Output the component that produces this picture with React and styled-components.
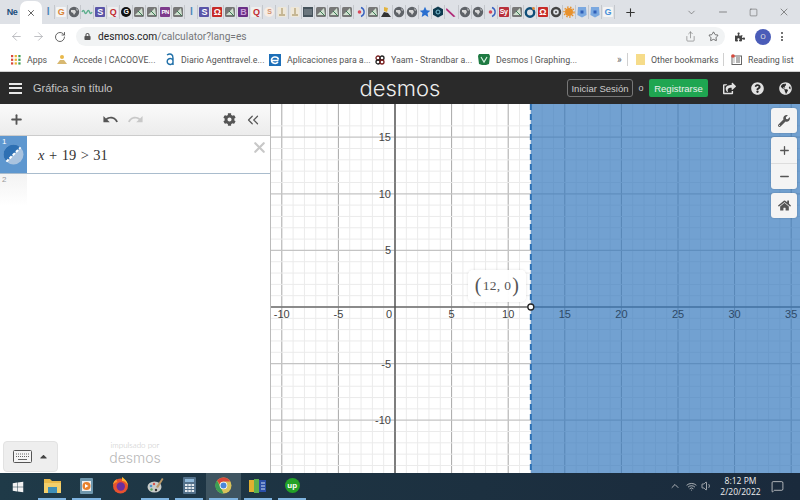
import React from 'react';
import styled, { createGlobalStyle } from 'styled-components';
import { ArrowLeft, ArrowRight, RotateCw, Share, Star, ChevronDown, Minus, Square, X, Plus, ChevronsLeft, ChevronUp, Volume1, MessageSquare, Wifi } from 'lucide-react';
import { FaLock, FaPuzzlePiece, FaShareSquare, FaQuestionCircle, FaGlobeAmericas, FaCog, FaWrench, FaHome, FaWindows, FaCaretUp } from 'react-icons/fa';
import { MdUndo, MdRedo } from 'react-icons/md';

const GlobalStyle = createGlobalStyle`
  html, body { margin: 0; padding: 0; background: #fff; }
  * { box-sizing: border-box; }
`;

const Page = styled.div`
  width: 800px;
  height: 500px;
  overflow: hidden;
  display: flex;
  flex-direction: column;
  font-family: Roboto, "Liberation Sans", sans-serif;
`;

/* browser chrome */
const TabStrip = styled.div`
  height: 24px;
  background: #dee1e6;
  display: flex;
  align-items: center;
  padding-left: 4px;
`;
const PinnedNote = styled.div`
  width: 16px;
  font: bold 9px "Liberation Sans", sans-serif;
  color: #1c4f7c;
  letter-spacing: -0.5px;
  text-align: center;
`;
const ActiveTab = styled.div`
  width: 22px;
  height: 24px;
  margin-top: 1px;
  background: #fff;
  border-radius: 7px 7px 0 0;
  display: flex;
  align-items: center;
  justify-content: center;
  color: #444;
`;
const FavRow = styled.div`
  display: flex;
  align-items: center;
`;
const FavSlot = styled.div`
  width: 13.03px;
  height: 14px;
  display: flex;
  align-items: center;
  justify-content: center;
  border-right: 1px solid #c4c7cc;
`;
const Tile = styled.span`
  width: 10px;
  height: 10px;
  display: flex;
  align-items: center;
  justify-content: center;
  background: ${p => p.$bg || 'transparent'};
  color: ${p => p.$fg || '#fff'};
  border-radius: ${p => (p.$round ? '50%' : '1px')};
  font: bold ${p => p.$size || 9}px/10px "Liberation Sans", sans-serif;
  letter-spacing: -0.5px;
`;
const NewTab = styled.div`
  margin-left: 9px;
  color: #333;
  display: flex;
`;
const WindowControls = styled.div`
  margin-left: auto;
  display: flex;
  align-items: center;
  color: #555;
  padding-right: 10px;
  gap: 20px;
`;
const Toolbar = styled.div`
  height: 24px;
  background: #fff;
  display: flex;
  align-items: center;
  padding: 1px 0 0 10px;
  color: #8a8c90;
`;
const NavButtons = styled.div`
  display: flex;
  align-items: center;
  gap: 9px;
  width: 66px;
`;
const Omnibox = styled.div`
  width: 649px;
  height: 19px;
  background: #f1f3f4;
  border-radius: 10px;
  display: flex;
  align-items: center;
  padding: 0 6px 0 8px;
`;
const Url = styled.div`
  margin-left: 7px;
  font-size: 10.2px;
  color: #75777a;
  span { color: #222; }
`;
const OmniIcons = styled.div`
  margin-left: auto;
  display: flex;
  align-items: center;
  gap: 12px;
  color: #555;
`;
const ProfileArea = styled.div`
  display: flex;
  align-items: center;
  margin-left: 10px;
  gap: 10px;
  color: #444;
`;
const Avatar = styled.div`
  width: 16px;
  height: 16px;
  border-radius: 50%;
  background: #4a5cb8;
  color: #ddd;
  font-size: 8px;
  display: flex;
  align-items: center;
  justify-content: center;
`;
const Dots = styled.div`
  display: flex;
  flex-direction: column;
  gap: 1.5px;
  i { width: 2px; height: 2px; background: #444; border-radius: 50%; display: block; }
`;
const Bookmarks = styled.div`
  height: 24px;
  background: #fff;
  border-bottom: 1px solid #d0d0d0;
  display: flex;
  align-items: center;
  padding-left: 11px;
`;
const Bookmark = styled.div`
  width: ${p => p.$w}px;
  flex: none;
  display: flex;
  align-items: center;
  gap: 6px;
  font-size: 8.8px;
  color: #555;
  white-space: nowrap;
  svg { flex: none; }
`;
const BookmarkSep = styled.div`
  width: 1px;
  height: 13px;
  background: #d0d0d0;
  flex: none;
  margin: ${p => p.$m};
`;
const Chevrons = styled.div`
  width: 10px;
  flex: none;
  margin-left: 44px;
  font-size: 10px;
  color: #666;
`;

/* desmos header */
const Header = styled.div`
  height: 32px;
  background: #2a2a2a;
  display: grid;
  grid-template-columns: 1fr auto 1fr;
  align-items: center;
  font-family: "Liberation Sans", sans-serif;
`;
const HeaderLeft = styled.div`
  display: flex;
  align-items: center;
  padding-left: 9px;
`;
const Burger = styled.div`
  width: 13px;
  display: flex;
  flex-direction: column;
  gap: 2.5px;
  i { display: block; height: 2px; background: #e8e8e8; }
`;
const GraphTitle = styled.div`
  margin-left: 11px;
  font-size: 11px;
  color: #c4c4c4;
`;
const Logo = styled.div`
  font-family: Inter, sans-serif;
  font-weight: 300;
  font-size: 22px;
  color: #eee;
  line-height: 32px;
`;
const HeaderRight = styled.div`
  display: flex;
  align-items: center;
  justify-content: flex-end;
  padding-right: 8px;
  color: #e2e2e2;
`;
const SignIn = styled.div`
  width: 66px;
  height: 18px;
  border: 1px solid #777;
  border-radius: 3px;
  font-size: 9.5px;
  color: #ccc;
  display: flex;
  align-items: center;
  justify-content: center;
`;
const OrText = styled.div`
  width: 16px;
  text-align: center;
  font-size: 9px;
  color: #ccc;
`;
const Register = styled.div`
  width: 59px;
  height: 18px;
  background: #1fa651;
  border-radius: 2px;
  font-size: 9.5px;
  color: #eee;
  display: flex;
  align-items: center;
  justify-content: center;
  margin-right: 15px;
`;
const HeaderIcons = styled.div`
  display: flex;
  align-items: center;
  gap: 15px;
`;

/* calculator body */
const Main = styled.div`
  height: 369px;
  display: flex;
`;
const Sidebar = styled.div`
  width: 271px;
  flex: none;
  display: flex;
  flex-direction: column;
  background: #fff;
  border-right: 1px solid #bbb;
`;
const ListTools = styled.div`
  height: 32px;
  flex: none;
  background: linear-gradient(#fafafa, #ececec);
  border-bottom: 1px solid #ccc;
  display: flex;
  align-items: center;
  padding-left: 9px;
  color: #555;
`;
const ToolGroup = styled.div`
  display: flex;
  align-items: center;
  gap: ${p => p.$gap}px;
  margin-left: ${p => p.$left}px;
`;
const ExpressionRow = styled.div`
  height: 38px;
  flex: none;
  display: flex;
  border-bottom: 1px solid #a9bccd;
`;
const RowTab = styled.div`
  width: 27px;
  flex: none;
  position: relative;
  background: #5e97cf;
  display: flex;
  align-items: center;
  justify-content: center;
`;
const RowIndex = styled.div`
  position: absolute;
  top: 1px;
  left: 2px;
  font: 8px "Liberation Sans", sans-serif;
  color: ${p => p.$muted ? '#999' : '#fff'};
`;
const MathField = styled.div`
  flex: 1;
  padding: 11px 0 0 11px;
  display: flex;
  justify-content: space-between;
  font: 14.5px "Liberation Serif", serif;
  color: #333;
  em { font-style: italic; }
  span { margin: 0 4.5px; }
`;
const RemoveBtn = styled.div`
  color: #c8c8c8;
  margin: -8px 2px 0 0;
  height: 16px;
`;
const EmptyRow = styled.div`
  height: 32px;
  width: 27px;
  flex: none;
  position: relative;
  background: linear-gradient(#f3f3f3, #fff);
`;
const SidebarFill = styled.div`
  flex: 1;
`;
const SidebarFoot = styled.div`
  height: 32px;
  flex: none;
  display: grid;
  grid-template-columns: 1fr auto 1fr;
  align-items: center;
  margin-bottom: 1px;
`;
const KeyboardBtn = styled.div`
  width: 55px;
  height: 31px;
  margin-left: 3px;
  background: #eee;
  border: 1px solid #e2e2e2;
  border-radius: 4px;
  display: flex;
  align-items: center;
  justify-content: center;
  gap: 6px;
  color: #444;
`;
const Powered = styled.div`
  text-align: center;
  color: #c4c4c4;
  font-family: Lato, sans-serif;
  font-weight: 300;
  margin-bottom: 6px;
  div { font-size: 8px; line-height: 9px; }
  strong { display: block; font-family: Inter, sans-serif; font-weight: 300; font-size: 14px; line-height: 15px; color: #b8b8b8; }
`;
const GraphArea = styled.div`
  flex: 1;
  position: relative;
  svg.graph { display: block; }
`;
const Tooltip = styled.div`
  position: absolute;
  left: 197px;
  top: 166px;
  width: 58px;
  height: 32px;
  background: rgba(255, 255, 255, 0.95);
  border-radius: 5px;
  box-shadow: 0 0 3px rgba(0, 0, 0, 0.12);
  display: flex;
  align-items: center;
  justify-content: center;
  font: 13.5px "Liberation Serif", serif;
  color: #555;
  letter-spacing: 0.3px;
  b { font-weight: 400; font-size: 20px; line-height: 20px; margin: 0 1px; position: relative; top: -1px; }
`;
const MapControls = styled.div`
  position: absolute;
  top: 4px;
  right: 3px;
  width: 26px;
  display: flex;
  flex-direction: column;
  gap: 4px;
`;
const ControlBox = styled.div`
  background: #f4f4f4;
  border-radius: 3px;
  box-shadow: 0 0 2px rgba(0, 0, 0, 0.25);
  color: #555;
`;
const ControlBtn = styled.div`
  height: ${p => p.$h}px;
  display: flex;
  align-items: center;
  justify-content: center;
  & + & { border-top: 1px solid #ddd; }
`;

/* windows taskbar */
const Taskbar = styled.div`
  height: 27px;
  flex: none;
  background: linear-gradient(90deg, #1f3a48, #1d3342 40%, #1a2a3c);
  display: flex;
  align-items: stretch;
  color: #eee;
`;
const StartBtn = styled.div`
  width: 35px;
  display: flex;
  align-items: center;
  justify-content: center;
  color: #f2f2f2;
`;
const TaskIcon = styled.div`
  width: 34.3px;
  flex: none;
  display: flex;
  align-items: center;
  justify-content: center;
  padding-bottom: 2px;
  position: relative;
  background: ${p => (p.$active ? '#3f5561' : 'transparent')};
  &::after {
    content: '';
    display: ${p => (p.$open ? 'block' : 'none')};
    position: absolute;
    left: 3px;
    right: 3px;
    bottom: 0;
    height: 2px;
    background: #7fb4e0;
  }
`;
const Tray = styled.div`
  margin-left: auto;
  display: flex;
  align-items: center;
  color: #ddd;
  gap: 4.5px;
  padding: 0 16px 1px 0;
`;
const Clock = styled.div`
  width: 46px;
  margin-right: 3px;
  padding-bottom: 1px;
  text-align: center;
  font: 8.5px/11px "Open Sans", sans-serif;
  color: #eee;
`;

const leaf = { kind: 'leaf' };
const globe = { kind: 'globe' };
const favs = [
  { text: 'l', fg: '#4a86b8', size: 10 }, { text: 'G', fg: '#d9843a', bg: '#f4f4f4' }, globe, { kind: 'wave' },
  { text: 'S', bg: '#5a55a8' }, { text: 'Q', fg: '#c02a30', bg: '#eee' }, { text: 'G', bg: '#111', round: true, size: 7 },
  leaf, leaf, { text: 'PN', bg: '#7d3a8c', size: 6 }, leaf, { text: 'l', fg: '#4a86b8', size: 10 },
  { text: 'S', bg: '#5a55a8' }, { text: 'Ω', bg: '#c72a28' }, leaf, { text: 'B', bg: '#6a2f86', fg: '#c9a0d8' },
  { text: 'Q', fg: '#c02a30', bg: '#eee' }, { text: 'S', fg: '#d29070', bg: '#f6ece4', round: true, size: 7 },
  { kind: 'pale' }, { kind: 'pale' }, { kind: 'calc' }, leaf, leaf, leaf, { kind: 'moon' }, leaf, { kind: 'cat' },
  globe, globe, { kind: 'star' }, { kind: 'hex' }, { kind: 'slash' }, globe, globe, { kind: 'moon' },
  { text: 'Sy', bg: '#b8303c', size: 7 }, leaf, { kind: 'ring' }, { text: 'Ω', bg: '#c72a28' }, { kind: 'gear' },
  { kind: 'orange' }, { kind: 'shield' }, { kind: 'shield' }, { text: 'G', fg: '#4a90d9', bg: '#f4f4f4' },
];

function FavGlyph({ kind }) {
  const inner = {
    leaf: <><rect x="1" y="1" width="10" height="10" rx="1.5" fill="#777" /><path d="M2 9 L9 2 L10 9Z" fill="#cfe0cf" /><path d="M5 5l5 5" stroke="#3d7a55" /></>,
    globe: <><circle cx="6" cy="6" r="5.2" fill="#5f6368" /><path d="M3 4h4l1 2-2 3-1-2-2-1z M8 2l2 2-1 1z" fill="#d8d8d8" /></>,
    wave: <path d="M1 6q1.5-3 2.5 0t2.5 0 2.5 0 2.5 0" fill="none" stroke="#5cae8c" strokeWidth="1.4" />,
    pale: <><rect x="1.5" y="1" width="9" height="10" rx="1" fill="#eee7d8" /><path d="M6 2v6M3 9h6" stroke="#b8a67c" strokeWidth="1.4" /></>,
    calc: <><rect x="1" y="1" width="10" height="10" fill="#46535c" /><path d="M2.5 4h7M2.5 6h7M2.5 8h7" stroke="#d8dde0" strokeDasharray="1 1" /></>,
    moon: <><circle cx="5.5" cy="6" r="1.8" fill="#d9485a" /><path d="M7 1.5a4.8 4.8 0 0 1 0 9" fill="none" stroke="#3a63c0" strokeWidth="1.4" /></>,
    cat: <><path d="M1 11l3-5 4 1 3 4z" fill="#333" /><path d="M4 1l4 1-1 4-3-1z" fill="#e2b33c" /></>,
    star: <path d="M6 .8l1.6 3.5 3.7.4-2.8 2.5.8 3.8L6 8.9 2.7 10.9l.8-3.8L.7 4.7l3.7-.4z" fill="#2a6fd0" />,
    hex: <><path d="M6 .5l5 2.8v5.4l-5 2.8-5-2.8V3.3z" fill="#0e3a4e" /><circle cx="6" cy="6" r="2" fill="none" stroke="#7fc4d8" /></>,
    slash: <path d="M1.5 2l9 8.5-2 .5L1 4z" fill="#b02a78" />,
    ring: <><circle cx="6" cy="6.5" r="4.2" fill="none" stroke="#0f4e78" strokeWidth="2.4" /><circle cx="9.5" cy="2.5" r="1.4" fill="#e28a3a" /></>,
    gear: <><circle cx="6" cy="6" r="4" fill="none" stroke="#444" strokeWidth="2.4" /><circle cx="6" cy="6" r="1" fill="#444" /></>,
    orange: <><circle cx="6" cy="6" r="4" fill="#e8912c" /><circle cx="6" cy="6" r="5" fill="none" stroke="#e8912c" strokeWidth="1.4" strokeDasharray="1.5 1.5" /></>,
    shield: <><path d="M2 1h8l.6 8L6 11.5 1.4 9z" fill="#7aa8e0" /><rect x="4.5" y="4.5" width="3" height="3" fill="#2f5fb8" /></>,
  };
  return <svg width="12" height="12" viewBox="0 0 12 12">{inner[kind]}</svg>;
}

const axisColor = '#444';
const ox = 124;
const oy = 203;
const unit = 11.32;

function Graph() {
  const vLines = [];
  for (let i = -11; i <= 36; i++) vLines.push(i);
  const hLines = [];
  for (let i = -16; i <= 18; i++) hLines.push(i);
  const xs = [-10, -5, 5, 10, 15, 20, 25, 30, 35];
  const ys = [-10, -5, 5, 10, 15];
  const shadeX = ox + 12 * unit;
  return (
    <svg className="graph" width="529" height="369" viewBox="0 0 529 369">
      <rect width="529" height="369" fill="#fff" />
      {vLines.map(i => (
        <line key={i} x1={ox + i * unit} x2={ox + i * unit} y1="0" y2="369"
          stroke={i % 5 === 0 ? '#a8a8a8' : '#ebebeb'} strokeWidth="1" />
      ))}
      {hLines.map(i => (
        <line key={i} x1="0" x2="529" y1={oy + i * unit} y2={oy + i * unit}
          stroke={i % 5 === 0 ? '#c4c4c4' : '#ebebeb'} strokeWidth={i % 5 === 0 ? 1.3 : 1} />
      ))}
      <line x1={ox} x2={ox} y1="0" y2="369" stroke={axisColor} strokeWidth="1.2" />
      <line x1="0" x2="529" y1={oy} y2={oy} stroke={axisColor} strokeWidth="1.2" />
      <rect x={shadeX} y="0" width={529 - shadeX} height="369" fill="#2f74bb" opacity="0.68" />
      <line x1={shadeX} x2={shadeX} y1="0" y2="369" stroke="#2d70b3" strokeWidth="2" strokeDasharray="6 4" />
      <g fontFamily="Liberation Sans, sans-serif" fontSize="11" fill="#444">
        {xs.map(v => (
          <text key={v} x={ox + v * unit} y={oy + 11} textAnchor="middle" fill={v > 12 ? '#2e4a68' : '#444'}>
            {v < 0 ? `-${-v}` : v}
          </text>
        ))}
        <text x={ox - 6} y={oy + 11} textAnchor="middle">0</text>
        {ys.map(v => (
          <text key={v} x={ox - 4} y={oy - v * unit + 4} textAnchor="end">{v < 0 ? `-${-v}` : v}</text>
        ))}
      </g>
      <circle cx={shadeX} cy={oy} r="3" fill="#fff" stroke="#222" strokeWidth="1.3" />
    </svg>
  );
}

function FolderIcon() {
  return (
    <svg width="17" height="15" viewBox="0 0 17 15">
      <path d="M0 1h6l2 2h9v12H0z" fill="#e9b949" />
      <rect x="0" y="5" width="17" height="10" fill="#f3cf6b" />
      <rect x="4" y="9" width="9" height="6" fill="#3f8fb8" />
    </svg>
  );
}
function MediaIcon() {
  return (
    <svg width="15" height="16" viewBox="0 0 15 16">
      <rect x="1" y="0" width="13" height="16" rx="1" fill="#6f97ad" />
      <rect x="3" y="3" width="9" height="10" fill="#eee" />
      <circle cx="7.5" cy="8" r="4" fill="#e8812c" />
      <path d="M6 6l3.5 2L6 10z" fill="#fff" />
    </svg>
  );
}
function FirefoxIcon() {
  return (
    <svg width="17" height="17" viewBox="0 0 17 17">
      <circle cx="8.5" cy="9" r="7.5" fill="#e8522f" />
      <circle cx="8.8" cy="9.5" r="4.2" fill="#6a2fa0" />
      <path d="M10 0c3 2 6 5 6 9-1-3-3-5-6-5z" fill="#ffb52e" />
      <path d="M1 8c0-3 2-5 4-6-1 2 0 3 1 3-2 0-4 1-5 3z" fill="#ff9a2e" />
    </svg>
  );
}
function PaletteIcon() {
  return (
    <svg width="17" height="17" viewBox="0 0 17 17">
      <ellipse cx="7.5" cy="10" rx="7" ry="5.5" fill="#c9ccc9" />
      <circle cx="4" cy="9" r="1.3" fill="#4a90c8" />
      <circle cx="7" cy="7" r="1.2" fill="#d9534a" />
      <circle cx="4.5" cy="12.5" r="1.2" fill="#5ca65c" />
      <circle cx="9" cy="13" r="1.2" fill="#333" />
      <path d="M9 10L15 1l1.5 1L11 11z" fill="#b89868" />
    </svg>
  );
}
function CalcIcon() {
  return (
    <svg width="13" height="17" viewBox="0 0 13 17">
      <rect width="13" height="17" rx="1" fill="#53718a" />
      <rect x="2" y="2" width="9" height="3" fill="#8fb8d8" />
      <path d="M2 7h2.5v2H2zM5.3 7h2.5v2H5.3zM8.6 7h2.5v2H8.6zM2 10h2.5v2H2zM5.3 10h2.5v2H5.3zM8.6 10h2.5v2H8.6zM2 13h2.5v2H2zM5.3 13h2.5v2H5.3zM8.6 13h2.5v2H8.6z" fill="#e6ebef" />
    </svg>
  );
}
function ChromeIcon() {
  return (
    <svg width="17" height="17" viewBox="0 0 17 17">
      <circle cx="8.5" cy="8.5" r="8" fill="#d9c25a" />
      <path d="M8.5.5A8 8 0 0 1 15.4 4.5H8.5A4 4 0 0 0 4.7 7.3L2 3.5A8 8 0 0 1 8.5.5z" fill="#d9483b" />
      <path d="M2 3.5l3.5 6.5 3 6.5A8 8 0 0 1 2 3.5z" fill="#3c9d55" />
      <circle cx="8.5" cy="8.5" r="3.8" fill="#fff" />
      <circle cx="8.5" cy="8.5" r="3" fill="#4a86d8" />
    </svg>
  );
}
function BooksIcon() {
  return (
    <svg width="18" height="14" viewBox="0 0 18 14">
      <rect x="0" y="1" width="5" height="12" fill="#e0b030" />
      <rect x="5" y="0" width="5" height="14" fill="#5cb04e" />
      <rect x="10" y="1" width="7" height="12" fill="#2a4fa8" />
      <path d="M12 4h4M12 7h4M12 10h4" stroke="#cfe0f4" />
    </svg>
  );
}
const UpBadge = styled.div`
  width: 15px;
  height: 15px;
  border-radius: 50%;
  background: #23a127;
  color: #fff;
  font: bold 8px "Liberation Sans", sans-serif;
  display: flex;
  align-items: center;
  justify-content: center;
`;

export default function App() {
  return (
    <Page>
      <GlobalStyle />
      <TabStrip>
        <PinnedNote>Ne</PinnedNote>
        <ActiveTab><X size={10} strokeWidth={2} /></ActiveTab>
        <FavRow>
          {favs.map((f, i) => (
            <FavSlot key={i}>
              {f.kind
                ? <FavGlyph kind={f.kind} />
                : <Tile $bg={f.bg} $fg={f.fg} $round={f.round} $size={f.size}>{f.text}</Tile>}
            </FavSlot>
          ))}
        </FavRow>
        <NewTab><Plus size={13} strokeWidth={2} /></NewTab>
        <WindowControls>
          <ChevronDown size={11} strokeWidth={1.3} />
          <Minus size={12} strokeWidth={1.3} />
          <Square size={9} strokeWidth={1.4} />
          <X size={12} strokeWidth={1.3} />
        </WindowControls>
      </TabStrip>
      <Toolbar>
        <NavButtons>
          <ArrowLeft size={13} strokeWidth={1.5} color="#b0b2b6" />
          <ArrowRight size={13} strokeWidth={1.5} color="#b0b2b6" />
          <RotateCw size={12} strokeWidth={1.8} color="#555" />
        </NavButtons>
        <Omnibox>
          <FaLock size={7} color="#555" />
          <Url><span>desmos.com</span>/calculator?lang=es</Url>
          <OmniIcons>
            <Share size={11} strokeWidth={1.4} color="#777" />
            <Star size={11} strokeWidth={1.6} color="#444" />
          </OmniIcons>
        </Omnibox>
        <ProfileArea>
          <FaPuzzlePiece size={10} />
          <Avatar>O</Avatar>
          <Dots><i /><i /><i /></Dots>
        </ProfileArea>
      </Toolbar>
      <Bookmarks>
        <Bookmark $w={46}>
          <svg width="10" height="10" viewBox="0 0 9 9">
            {[0, 3.3, 6.6].map(y => [0, 3.3, 6.6].map((x, i) => (
              <rect key={`${x}${y}`} x={x} y={y} width="2" height="2" fill={['#d9483b', '#e8b030', '#3c9d55'][i]} />
            )))}
          </svg>
          Apps
        </Bookmark>
        <Bookmark $w={108}>
          <svg width="10" height="11" viewBox="0 0 10 11"><circle cx="5" cy="3" r="2" fill="#e8b84a" /><path d="M0 10h10L7 6H3z" fill="#d8b870" /></svg>
          Accede | CACOOVE...
        </Bookmark>
        <Bookmark $w={104}>
          <svg width="10" height="13" viewBox="0 0 10 13"><path d="M2 2c3-2 6-1 6 3v7M8 7.5a3 3 0 1 0 0 2" fill="none" stroke="#1f6fa8" strokeWidth="1.4" /></svg>
          Diario Agenttravel.e...
        </Bookmark>
        <Bookmark $w={106}>
          <svg width="12" height="12" viewBox="0 0 12 12"><rect width="12" height="12" fill="#1d6fb8" /><path d="M9.5 6.5h-7a3.5 3 0 0 1 7-1M2.500 6.500a3.500 3 0 0 0 6.500 1.500" fill="none" stroke="#fff" strokeWidth="1.5" /></svg>
          Aplicaciones para a...
        </Bookmark>
        <Bookmark $w={103}>
          <svg width="10" height="10" viewBox="0 0 10 10"><circle cx="3" cy="3" r="2" fill="none" stroke="#7a1f1f" strokeWidth="1.3" /><circle cx="7" cy="3" r="2" fill="none" stroke="#222" strokeWidth="1.3" /><circle cx="3" cy="7" r="2" fill="none" stroke="#222" strokeWidth="1.3" /><circle cx="7" cy="7" r="2" fill="none" stroke="#7a1f1f" strokeWidth="1.3" /></svg>
          Yaam - Strandbar a...
        </Bookmark>
        <Bookmark $w={95}>
          <svg width="12" height="11" viewBox="0 0 12 11"><path d="M1 0h10l1 2-1 8-3 1H4l-3-1-1-8z" fill="#1e7a42" /><path d="M3 3l3 5 3-5" fill="none" stroke="#d6f0e0" strokeWidth="1.2" /></svg>
          Desmos | Graphing...
        </Bookmark>
        <Chevrons>»</Chevrons>
        <BookmarkSep $m="0 8px 0 0" />
        <Bookmark $w={87}>
          <svg width="9" height="11" viewBox="0 0 9 11"><path d="M0 0h9v11H0z" fill="#f6dc8a" /></svg>
          Other bookmarks
        </Bookmark>
        <BookmarkSep $m="0 7px 0 0" />
        <Bookmark $w={60}>
          <svg width="11" height="11" viewBox="0 0 11 11"><rect x="1" y="2" width="9.5" height="8.5" fill="none" stroke="#666" /><path d="M5 4h4M5 6h4M5 8h4M2.5 4h1M2.5 6h1M2.5 8h1" stroke="#666" /><circle cx="2" cy="2" r="1.8" fill="#d9483b" /></svg>
          Reading list
        </Bookmark>
      </Bookmarks>
      <Header>
        <HeaderLeft>
          <Burger><i /><i /><i /></Burger>
          <GraphTitle>Gráfica sin título</GraphTitle>
        </HeaderLeft>
        <Logo>desmos</Logo>
        <HeaderRight>
          <SignIn>Iniciar Sesión</SignIn>
          <OrText>o</OrText>
          <Register>Registrarse</Register>
          <HeaderIcons>
            <FaShareSquare size={13} />
            <FaQuestionCircle size={13} />
            <FaGlobeAmericas size={13} />
          </HeaderIcons>
        </HeaderRight>
      </Header>
      <Main>
        <Sidebar>
          <ListTools>
            <Plus size={15} strokeWidth={3} />
            <ToolGroup $gap={8} $left={78}>
              <MdUndo size={17} />
              <MdRedo size={17} color="#c8c8c8" />
            </ToolGroup>
            <ToolGroup $gap={8} $left={79}>
              <FaCog size={13} />
              <ChevronsLeft size={18} strokeWidth={1.6} />
            </ToolGroup>
          </ListTools>
          <ExpressionRow>
            <RowTab>
              <RowIndex>1</RowIndex>
              <svg width="21" height="21" viewBox="0 0 21 21">
                <circle cx="10.5" cy="10.5" r="10" fill="#a9c3df" />
                <path d="M3.4 17.6A10 10 0 0 1 17.6 3.4z" fill="#2d70b3" />
                <path d="M3.4 17.6L17.6 3.4" stroke="#fff" strokeWidth="2" strokeDasharray="3 1.5" />
              </svg>
            </RowTab>
            <MathField>
              <div><em>x</em><span>+</span>19<span>&gt;</span>31</div>
              <RemoveBtn><X size={17} strokeWidth={3} /></RemoveBtn>
            </MathField>
          </ExpressionRow>
          <EmptyRow><RowIndex $muted>2</RowIndex></EmptyRow>
          <SidebarFill />
          <SidebarFoot>
            <KeyboardBtn>
              <svg width="19" height="13" viewBox="0 0 19 13">
                <rect x="0.5" y="0.5" width="18" height="12" rx="1" fill="#f4f4f4" stroke="#555" />
                <path d="M3 4h13M3 6.5h13" stroke="#666" strokeDasharray="1 1" />
                <path d="M5 9.5h9" stroke="#666" />
              </svg>
              <FaCaretUp size={11} />
            </KeyboardBtn>
            <Powered>
              <div>impulsado por</div>
              <strong>desmos</strong>
            </Powered>
            <span />
          </SidebarFoot>
        </Sidebar>
        <GraphArea>
          <Graph />
          <Tooltip><b>(</b>12, 0<b>)</b></Tooltip>
          <MapControls>
            <ControlBox><ControlBtn $h={25}><FaWrench size={12} /></ControlBtn></ControlBox>
            <ControlBox>
              <ControlBtn $h={26}><Plus size={13} strokeWidth={2.4} /></ControlBtn>
              <ControlBtn $h={26}><Minus size={13} strokeWidth={2.4} /></ControlBtn>
            </ControlBox>
            <ControlBox><ControlBtn $h={25}><FaHome size={13} /></ControlBtn></ControlBox>
          </MapControls>
        </GraphArea>
      </Main>
      <Taskbar>
        <StartBtn><FaWindows size={12} /></StartBtn>
        <TaskIcon $open><FolderIcon /></TaskIcon>
        <TaskIcon $open><MediaIcon /></TaskIcon>
        <TaskIcon><FirefoxIcon /></TaskIcon>
        <TaskIcon $open><PaletteIcon /></TaskIcon>
        <TaskIcon $open><CalcIcon /></TaskIcon>
        <TaskIcon $open $active><ChromeIcon /></TaskIcon>
        <TaskIcon $open><BooksIcon /></TaskIcon>
        <TaskIcon $open><UpBadge>up</UpBadge></TaskIcon>
        <Tray>
          <ChevronUp size={12} strokeWidth={1.5} />
          <Wifi size={11} strokeWidth={1.6} />
          <Volume1 size={12} strokeWidth={1.4} />
          <Clock>8:12 PM<br />2/20/2022</Clock>
          <MessageSquare size={13} strokeWidth={1.4} />
        </Tray>
      </Taskbar>
    </Page>
  );
}
